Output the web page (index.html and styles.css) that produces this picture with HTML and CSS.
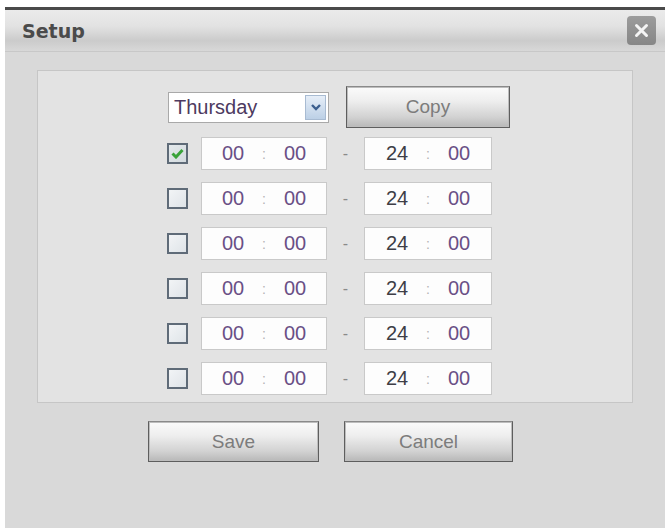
FILE: index.html
```html
<!DOCTYPE html>
<html>
<head>
<meta charset="utf-8">
<link rel="stylesheet" href="styles.css">
</head>
<body>
<div class="dialog">
  <div class="titlebar">
    <span class="title">Setup</span>
    <span class="close"><svg width="29" height="29" viewBox="0 0 29 29"><path d="M9.5 9.5 L19.5 19.5 M19.5 9.5 L9.5 19.5" stroke="#f4f4f4" stroke-width="3" stroke-linecap="round"/></svg></span>
  </div>
  <div class="content">
    <div class="panel">
      <div class="head">
        <div class="select">
          <span class="sel-text">Thursday</span>
          <span class="sel-arrow"><svg width="12" height="9" viewBox="0 0 12 9"><path d="M2 2 L6 6 L10 2" fill="none" stroke="#3c5f8f" stroke-width="2.4"/></svg></span>
        </div>
        <div class="btn btn-copy">Copy</div>
      </div>
      <div class="rows">
        <div class="row">
          <span class="cb checked"><svg width="13" height="11" viewBox="0 0 13 11"><path d="M1.5 5.5 L5 9 L11.5 2" fill="none" stroke="#39a33a" stroke-width="3"/></svg></span>
          <div class="tbox"><span class="num">00</span><span class="colon">:</span><span class="num">00</span></div>
          <span class="dash">-</span>
          <div class="tbox wide"><span class="num dark">24</span><span class="colon">:</span><span class="num">00</span></div>
        </div>
        <div class="row">
          <span class="cb"></span>
          <div class="tbox"><span class="num">00</span><span class="colon">:</span><span class="num">00</span></div>
          <span class="dash">-</span>
          <div class="tbox wide"><span class="num dark">24</span><span class="colon">:</span><span class="num">00</span></div>
        </div>
        <div class="row">
          <span class="cb"></span>
          <div class="tbox"><span class="num">00</span><span class="colon">:</span><span class="num">00</span></div>
          <span class="dash">-</span>
          <div class="tbox wide"><span class="num dark">24</span><span class="colon">:</span><span class="num">00</span></div>
        </div>
        <div class="row">
          <span class="cb"></span>
          <div class="tbox"><span class="num">00</span><span class="colon">:</span><span class="num">00</span></div>
          <span class="dash">-</span>
          <div class="tbox wide"><span class="num dark">24</span><span class="colon">:</span><span class="num">00</span></div>
        </div>
        <div class="row">
          <span class="cb"></span>
          <div class="tbox"><span class="num">00</span><span class="colon">:</span><span class="num">00</span></div>
          <span class="dash">-</span>
          <div class="tbox wide"><span class="num dark">24</span><span class="colon">:</span><span class="num">00</span></div>
        </div>
        <div class="row">
          <span class="cb"></span>
          <div class="tbox"><span class="num">00</span><span class="colon">:</span><span class="num">00</span></div>
          <span class="dash">-</span>
          <div class="tbox wide"><span class="num dark">24</span><span class="colon">:</span><span class="num">00</span></div>
        </div>
      </div>
    </div>
    <div class="actions">
      <div class="btn btn-save">Save</div>
      <div class="btn btn-cancel">Cancel</div>
    </div>
  </div>
</div>
</body>
</html>
```
FILE: styles.css
```css
html, body {
  margin: 0;
  padding: 0;
  background: #ffffff;
}
.dialog {
  margin: 7px 0 0 5px;
  width: 660px;
  height: 521px;
  box-sizing: border-box;
  border-top: 3px solid #4a4a4a;
  background: #d9d9d9;
  font-family: "Liberation Sans", Arial, sans-serif;
}
.titlebar {
  height: 42px;
  box-sizing: border-box;
  display: flex;
  align-items: center;
  justify-content: space-between;
  padding: 0 9px 0 17px;
  background: linear-gradient(#ebebeb 0%, #e2e2e2 40%, #cbcbcb 75%, #d8d8d8 100%);
  border-bottom: 1px solid #c8c8c8;
}
.title {
  font-family: "DejaVu Sans", Verdana, sans-serif;
  font-weight: bold;
  font-size: 19px;
  color: #4b4b4b;
}
.close {
  width: 29px;
  height: 29px;
  border-radius: 4px;
  background: linear-gradient(#9c9c9c, #868686);
  display: flex;
}
.content {
  padding: 18px 0 0 32px;
}
.panel {
  width: 596px;
  box-sizing: border-box;
  border: 1px solid #c6c6c6;
  background: #e3e3e3;
  padding: 15px 0 7px 129px;
}
.head {
  display: flex;
  align-items: center;
  gap: 17px;
}
.select {
  margin-left: 1px;
  width: 161px;
  height: 31px;
  box-sizing: border-box;
  border: 1px solid #a9a9a9;
  background: #ffffff;
  display: flex;
  align-items: center;
  justify-content: space-between;
  padding: 0 2px 0 5px;
}
.sel-text {
  font-size: 20px;
  color: #4d3a60;
}
.sel-arrow {
  width: 21px;
  height: 25px;
  box-sizing: border-box;
  border: 1px solid #a8bbd2;
  background: linear-gradient(#e6eef8, #bcd0e6);
  display: flex;
  align-items: center;
  justify-content: center;
}
.btn {
  box-sizing: border-box;
  height: 42px;
  display: flex;
  align-items: center;
  justify-content: center;
  font-size: 19px;
  color: #7c7c7c;
  border: 1px solid #5e5e5e;
  border-top-color: #8a8a8a;
  box-shadow: inset 0 0 0 1px #bdbdbd;
  background: linear-gradient(#fbfbfb 0%, #eeeeee 35%, #d2d2d2 75%, #b8b8b8 100%);
}
.btn-copy {
  width: 164px;
}
.rows {
  margin-top: 9px;
  display: flex;
  flex-direction: column;
  gap: 12px;
}
.row {
  display: flex;
  align-items: center;
  height: 33px;
}
.cb {
  width: 21px;
  height: 21px;
  box-sizing: border-box;
  border: 2px solid #5f6b78;
  background: linear-gradient(135deg, #f2f4f6, #dfe4e8);
  margin-right: 13px;
  display: flex;
  align-items: center;
  justify-content: center;
}
.cb.checked {
  background: linear-gradient(135deg, #e4e9ec, #d3dade);
}
.tbox {
  width: 126px;
  height: 33px;
  box-sizing: border-box;
  border: 1px solid #c9c9c9;
  background: #fdfdfd;
  display: flex;
  align-items: center;
  justify-content: center;
}
.tbox.wide {
  width: 128px;
}
.num {
  width: 42px;
  text-align: center;
  font-size: 20px;
  color: #6a4f86;
}
.num.dark {
  color: #3e3e46;
}
.colon {
  width: 20px;
  text-align: center;
  font-size: 14px;
  color: #b4b4b4;
}
.dash {
  width: 37px;
  text-align: center;
  font-size: 16px;
  color: #8a8a8a;
}
.actions {
  margin: 18px 0 0 111px;
  display: flex;
  gap: 25px;
}
.btn-save {
  width: 171px;
  height: 41px;
}
.btn-cancel {
  width: 169px;
  height: 41px;
}
```
